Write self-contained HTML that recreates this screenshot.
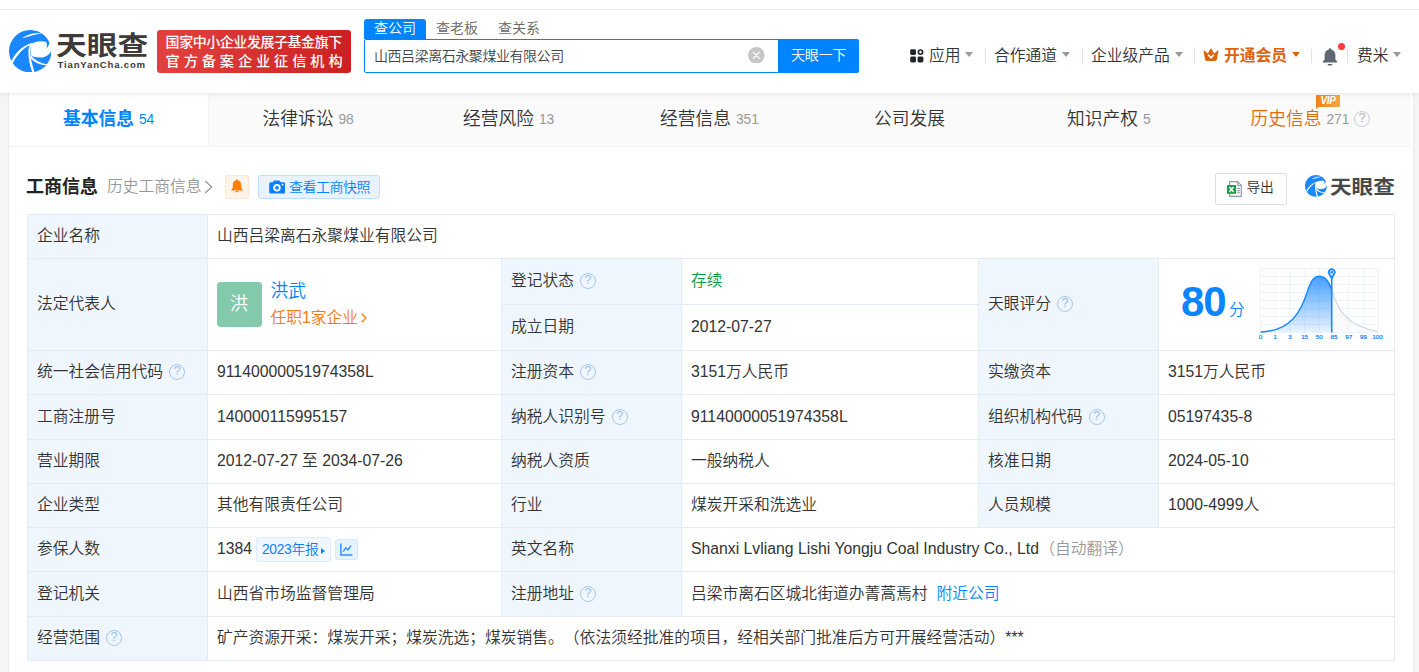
<!DOCTYPE html>
<html lang="zh-CN">
<head>
<meta charset="utf-8">
<title>山西吕梁离石永聚煤业有限公司 - 天眼查</title>
<style>
*{box-sizing:border-box;margin:0;padding:0}
html,body{width:1419px;height:672px;overflow:hidden;background:#f5f5f5}
body{font-weight:350;text-spacing-trim:space-all;font-family:"Liberation Sans","Noto Sans CJK SC",sans-serif;font-size:16px;color:#333;position:relative}
.abs{position:absolute;white-space:nowrap}
/* top strip + header */
#topstrip{z-index:6;position:absolute;left:0;top:0;width:1419px;height:10px;background:#fff;border-bottom:1px solid #e6e6e6}
#header{position:absolute;left:0;top:10px;width:1419px;height:83px;background:#fff;box-shadow:0 1px 5px rgba(0,0,0,.09);z-index:5}
#main{position:absolute;left:9px;top:93px;width:1404px;height:579px;background:#fff;box-shadow:0 0 0 1px #ebebeb}
.nv{top:35px;font-size:15.77px;line-height:22px;color:#333}
.car{position:absolute;top:42px;width:0;height:0;border-left:4.6px solid transparent;border-right:4.6px solid transparent;border-top:5.2px solid #999;margin-left:-0.5px}
.dv{position:absolute;top:39px;width:1px;height:14px;background:#dde2e8}
/* tabs */
#tabs{position:absolute;left:0;top:0;width:1401px;height:54px;background:#fafafa;border-bottom:1px solid #f4f4f4}
.tab{position:absolute;top:0;height:53px;line-height:53px;font-size:17.74px;color:#333;white-space:nowrap}
.tab .n{font-size:13.8px;color:#999;margin-left:5px;position:relative;top:-1px}
#tab-active{left:0;width:200px;background:#fff;border-right:1px solid #f3f3f3;height:53px}
/* table */
.c{position:absolute;border-left:1px solid #e3ecf6;border-top:1px solid #e3ecf6;font-size:15.77px;white-space:nowrap;padding-left:9px;color:#333;background:#fff;overflow:hidden}
.c.l{background:#eff6fe}
.q{display:inline-block;width:16px;height:16px;border:1.4px solid #a3c9f0;border-radius:50%;color:#98c0ea;font-size:12.5px;line-height:13.5px;text-align:center;vertical-align:2.5px;margin-left:6px;font-family:"Liberation Sans",sans-serif}
</style>
</head>
<body>
<div id="topstrip"></div>
<div id="header">
  <!-- logo -->
  <svg class="abs" style="left:8.8px;top:19.6px" width="42.4" height="42.4" viewBox="62 60 548 548">
    <circle cx="336" cy="334" r="274" fill="#1a87ff"/>
    <path d="M340 242 C400 205 480 195 540 213 C556 240 556 272 546 298 C570 276 585 246 584 212 L620 260 L620 318 L606 319 C596 372 548 408 485 414 C430 418 385 408 352 396 C338 350 336 290 340 242 Z" fill="#fff"/>
    <path d="M240 160 C320 110 400 94 496 100 C410 118 330 140 240 168 Z" fill="#fff"/>
    <path d="M88 467 C150 348 240 262 352 228 L357 245 C261 282 172 371 110 488 Z" fill="#fff"/>
    <path d="M343 239 C330 300 328 420 394 606 L364 611 C305 440 304 320 329 245 Z" fill="#fff"/>
    <path d="M346 388 C390 446 460 490 552 503 L548 513 C450 512 376 474 336 412 Z" fill="#fff"/>
  </svg>
  <div class="abs" id="logotxt" style="left:55.8px;top:19px;font-size:25.8px;line-height:34px;font-weight:700;color:#3e3a39;transform:scaleX(1.19);transform-origin:0 0">天眼查</div>
  <div class="abs" id="logosub" style="left:57.6px;top:49px;font-size:9.6px;line-height:12px;font-weight:700;color:#3e3a39;letter-spacing:0.8px">TianYanCha.com</div>
  <!-- red badge -->
  <div class="abs" id="badge" style="left:157px;top:20px;width:194px;height:43px;border-radius:3px;background:linear-gradient(90deg,#e2423f,#cb2021);color:#fff;font-weight:500"></div>
  <div class="abs" style="left:165.6px;top:23px;color:#fff;font-size:14px;line-height:18px;letter-spacing:-0.45px;font-weight:500">国家中小企业发展子基金旗下</div>
  <div class="abs" style="left:165.6px;top:42px;color:#fff;font-size:14.2px;line-height:18px;letter-spacing:3.9px;font-weight:500">官方备案企业征信机构</div>
  <!-- search tabs -->
  <div class="abs" style="left:364px;top:9px;width:62px;height:20px;background:#0084ff;border-radius:3px 3px 0 0;color:#fff;font-size:14px;line-height:19px;text-align:center">查公司</div>
  <div class="abs" style="left:426px;top:9px;width:62px;height:20px;color:#666;font-size:14px;line-height:19px;text-align:center">查老板</div>
  <div class="abs" style="left:488px;top:9px;width:62px;height:20px;color:#666;font-size:14px;line-height:19px;text-align:center">查关系</div>
  <!-- search input -->
  <div class="abs" style="left:364px;top:29px;width:415px;height:34px;border:1px solid #0084ff;border-radius:2px 0 0 2px;background:#fff"></div>
  <div class="abs" style="left:374px;top:36px;font-size:14px;line-height:20px;color:#444;letter-spacing:-0.45px">山西吕梁离石永聚煤业有限公司</div>
  <svg class="abs" style="left:748.3px;top:36.6px" width="16.6" height="16.6" viewBox="0 0 18 18"><circle cx="9" cy="9" r="9" fill="#c6c6c6"/><path d="M5.6 5.6 L12.4 12.4 M12.4 5.6 L5.6 12.4" stroke="#fff" stroke-width="1.3" stroke-linecap="round"/></svg>
  <div class="abs" style="left:778px;top:29px;width:81px;height:34px;background:#0084ff;border-radius:0 2px 2px 0;color:#fff;font-size:14px;line-height:33px;text-align:center;letter-spacing:-0.3px">天眼一下</div>
  <!-- right nav -->
  <div id="nav">
    <svg class="abs" style="left:910px;top:39px" width="13.6" height="13.6" viewBox="0 0 14 14"><rect x="0.2" y="0.2" width="6" height="6" rx="1.5" fill="#20242b"/><rect x="0.2" y="7.8" width="6" height="6" rx="1.5" fill="#20242b"/><rect x="7.8" y="7.8" width="6" height="6" rx="1.5" fill="#20242b"/><circle cx="10.8" cy="3.2" r="2.2" fill="none" stroke="#20242b" stroke-width="1.7"/></svg>
    <div class="abs nv" style="left:929px">应用</div><i class="car" style="left:965px"></i>
    <i class="dv" style="left:985px"></i>
    <div class="abs nv" style="left:994px">合作通道</div><i class="car" style="left:1062px"></i>
    <i class="dv" style="left:1082px"></i>
    <div class="abs nv" style="left:1091px">企业级产品</div><i class="car" style="left:1175px"></i>
    <i class="dv" style="left:1194px"></i>
    <svg class="abs" style="left:1203px;top:38.4px" width="16" height="13.4" viewBox="0 0 16 13.4"><path d="M0.5 2.6 Q0.7 2 1.4 2.5 L4.7 5.4 L7.5 0.7 Q8 0 8.5 0.7 L11.3 5.4 L14.6 2.5 Q15.3 2 15.5 2.6 L14 11.2 Q13.7 13 12 13 L4 13 Q2.3 13 2 11.2 Z" fill="#da650d"/><path d="M5.2 6.8 L8 9.8 L10.8 6.8" fill="none" stroke="#fff" stroke-width="1.7"/></svg>
    <div class="abs nv" style="left:1224px;color:#da650d;font-weight:700">开通会员</div><i class="car" style="left:1292px;border-top-color:#da650d"></i>
    <i class="dv" style="left:1311px"></i>
    <svg class="abs" style="left:1321.5px;top:37px" width="16" height="20" viewBox="0 0 16 20"><path d="M8 1.2 C8.7 1.2 9.2 1.7 9.2 2.4 C11.9 3 13.4 5.2 13.4 8 L13.4 12.4 L15.2 14.6 L15.2 15.6 L0.8 15.6 L0.8 14.6 L2.6 12.4 L2.6 8 C2.6 5.2 4.1 3 6.8 2.4 C6.8 1.7 7.3 1.2 8 1.2 Z" fill="#5f6872"/><rect x="5.6" y="17" width="4.8" height="1.6" rx=".8" fill="#5f6872"/></svg>
    <i class="abs" style="left:1338px;top:33px;width:7px;height:7px;border-radius:50%;background:#ff3b3b"></i>
    <i class="dv" style="left:1347px"></i>
    <div class="abs nv" style="left:1357px">费米</div><i class="car" style="left:1393px"></i>
  </div>
</div>
<div id="main">
  <div id="tabs">
    <div class="tab" id="tab-active"></div>
    <div class="tab" style="left:54px;color:#0084ff;font-weight:700">基本信息<span class="n" style="color:#0084ff;font-weight:350">54</span></div>
    <div class="tab" style="left:253.5px">法律诉讼<span class="n">98</span></div>
    <div class="tab" style="left:454px">经营风险<span class="n">13</span></div>
    <div class="tab" style="left:651px">经营信息<span class="n">351</span></div>
    <div class="tab" style="left:865px">公司发展</div>
    <div class="tab" style="left:1058px">知识产权<span class="n">5</span></div>
    <div class="tab" style="left:1241.5px;color:#e0690f">历史信息<span class="n">271</span></div>
    <div class="abs" style="left:1345px;top:17.5px;width:16px;height:16px;border:1.5px solid #c9ced4;border-radius:50%;color:#b4b9bf;font-size:12.5px;line-height:13px;text-align:center;font-family:'Liberation Sans',sans-serif">?</div>
    <div class="abs" style="left:1307px;top:2.4px;width:24px;height:12px;background:linear-gradient(90deg,#f0831a,#f6a545);color:#fff;font-size:10px;line-height:12px;font-weight:700;font-style:italic;text-align:center;border-radius:1px;letter-spacing:-0.3px">VIP</div>
    <i class="abs" style="left:1307px;top:14px;width:0;height:0;border-top:2.5px solid #f0831a;border-right:3px solid transparent"></i>
  </div>
  <!-- section header -->
  <div class="abs" style="left:17px;top:81px;font-size:18px;line-height:26px;font-weight:700;color:#222">工商信息</div>
  <div class="abs" style="left:98px;top:82px;font-size:15.77px;line-height:24px;color:#999">历史工商信息<svg width="9" height="14" viewBox="0 0 9 14" style="margin-left:2px;vertical-align:-1.5px"><path d="M1.2 1 L7.6 7 L1.2 13" fill="none" stroke="#999" stroke-width="1.3"/></svg></div>
  <div class="abs" style="left:216px;top:82px;width:24px;height:24px;background:#fff4ea;border:1px solid #ffe6d0;border-radius:2px"></div>
  <svg class="abs" style="left:222px;top:85.6px" width="12" height="14" viewBox="0 0 12 14"><path d="M6 0.6 C6.7 0.6 7.1 1 7.1 1.6 C9.1 2.1 10.2 3.8 10.2 5.8 L10.2 8.8 L11.6 10.6 L11.6 11.4 L0.4 11.4 L0.4 10.6 L1.8 8.8 L1.8 5.8 C1.8 3.8 2.9 2.1 4.9 1.6 C4.9 1 5.3 0.6 6 0.6 Z" fill="#ff7d0a"/><path d="M4.2 12 L7.8 12 Q7.4 13.4 6 13.4 Q4.6 13.4 4.2 12 Z" fill="#ff7d0a"/></svg>
  <div class="abs" style="left:249px;top:82px;width:122px;height:24px;background:#e9f3ff;border:1px solid #c0defe;border-radius:3px"></div>
  <svg class="abs" style="left:259.5px;top:87px" width="16.4" height="14" viewBox="0 0 16.4 14"><path d="M5 0.4 L10.4 0.4 L11.6 2.2 L14.6 2.2 Q16.2 2.2 16.2 3.8 L16.2 12 Q16.2 13.6 14.6 13.6 L1.8 13.6 Q0.2 13.6 0.2 12 L0.2 3.8 Q0.2 2.2 1.8 2.2 L3.8 2.2 Z" fill="#0a80ff"/><circle cx="8" cy="7.8" r="3.7" fill="#fff"/><circle cx="8" cy="7.8" r="1.9" fill="#0a80ff"/><circle cx="13.6" cy="4.6" r="0.9" fill="#fff"/></svg>
  <div class="abs" style="left:280px;top:84px;font-size:14px;line-height:20px;color:#0582ff;letter-spacing:-0.5px">查看工商快照</div>
  <!-- export + watermark -->
  <div class="abs" style="left:1206px;top:80px;width:72px;height:32px;background:#fff;border:1px solid #dedede;border-radius:2px"></div>
  <svg class="abs" style="left:1218px;top:88px" width="15" height="16" viewBox="0 0 15 16"><path d="M2.6 0.7 H10.6 L14.3 4.4 V15.3 H2.6 Z" fill="#fff" stroke="#8f99a6" stroke-width="1.2" stroke-linejoin="round"/><path d="M10.6 0.7 V4.4 H14.3" fill="none" stroke="#8f99a6" stroke-width="1"/><path d="M10.2 7.4H13M10.2 9.6H13M10.2 11.8H13" stroke="#8f99a6" stroke-width="1.1"/><rect x="0" y="4" width="9" height="8.8" fill="#17a24a"/><path d="M2.5 6 L6.5 10.8 M6.5 6 L2.5 10.8" stroke="#fff" stroke-width="1.5"/></svg>
  <div class="abs" style="left:1237.6px;top:85.4px;font-size:13.8px;line-height:20px;color:#333;letter-spacing:-0.4px">导出</div>
  <svg class="abs" style="left:1296px;top:82.4px" width="21.8" height="21.8" viewBox="62 60 548 548">
    <circle cx="336" cy="334" r="274" fill="#1a87ff"/>
    <path d="M340 242 C400 205 480 195 540 213 C556 240 556 272 546 298 C570 276 585 246 584 212 L620 260 L620 318 L606 319 C596 372 548 408 485 414 C430 418 385 408 352 396 C338 350 336 290 340 242 Z" fill="#fff"/>
    <path d="M240 160 C320 110 400 94 496 100 C410 118 330 140 240 168 Z" fill="#fff"/>
    <path d="M88 467 C150 348 240 262 352 228 L357 245 C261 282 172 371 110 488 Z" fill="#fff"/>
    <path d="M343 239 C330 300 328 420 394 606 L364 611 C305 440 304 320 329 245 Z" fill="#fff"/>
    <path d="M346 388 C390 446 460 490 552 503 L548 513 C450 512 376 474 336 412 Z" fill="#fff"/>
  </svg>
  <div class="abs" id="wm" style="left:1320.5px;top:80.2px;font-size:18.8px;line-height:30px;font-weight:700;color:#484848;transform:scaleX(1.15);transform-origin:0 0">天眼查</div>
  <!-- table -->
  <div class="c l" style="left:18px;top:121px;width:180px;height:44px;line-height:41px;">企业名称</div>
  <div class="c v" style="left:198px;top:121px;width:1187px;height:44px;line-height:41px;">山西吕梁离石永聚煤业有限公司</div>
  <div class="c l" style="left:18px;top:165px;width:180px;height:92px;line-height:89px;">法定代表人</div>
  <div class="c v" style="left:198px;top:165px;width:294px;height:92px;line-height:89px;"></div>
  <div class="c l" style="left:492px;top:165px;width:180px;height:46px;line-height:43px;">登记状态<span class="q">?</span></div>
  <div class="c v" style="left:672px;top:165px;width:297px;height:46px;line-height:43px;"><span style="color:#089944">存续</span></div>
  <div class="c l" style="left:492px;top:211px;width:180px;height:46px;line-height:43px;">成立日期</div>
  <div class="c v" style="left:672px;top:211px;width:297px;height:46px;line-height:43px;">2012-07-27</div>
  <div class="c l" style="left:969px;top:165px;width:180px;height:92px;line-height:89px;">天眼评分<span class="q">?</span></div>
  <div class="c v" style="left:1149px;top:165px;width:236px;height:92px;line-height:89px;"></div>
  <div class="c l" style="left:18px;top:257px;width:180px;height:44px;line-height:41px;">统一社会信用代码<span class="q">?</span></div>
  <div class="c v" style="left:198px;top:257px;width:294px;height:44px;line-height:41px;">91140000051974358L</div>
  <div class="c l" style="left:492px;top:257px;width:180px;height:44px;line-height:41px;">注册资本<span class="q">?</span></div>
  <div class="c v" style="left:672px;top:257px;width:297px;height:44px;line-height:41px;">3151万人民币</div>
  <div class="c l" style="left:969px;top:257px;width:180px;height:44px;line-height:41px;">实缴资本</div>
  <div class="c v" style="left:1149px;top:257px;width:236px;height:44px;line-height:41px;">3151万人民币</div>
  <div class="c l" style="left:18px;top:301px;width:180px;height:45px;line-height:43px;">工商注册号</div>
  <div class="c v" style="left:198px;top:301px;width:294px;height:45px;line-height:43px;">140000115995157</div>
  <div class="c l" style="left:492px;top:301px;width:180px;height:45px;line-height:43px;">纳税人识别号<span class="q">?</span></div>
  <div class="c v" style="left:672px;top:301px;width:297px;height:45px;line-height:43px;">91140000051974358L</div>
  <div class="c l" style="left:969px;top:301px;width:180px;height:45px;line-height:43px;">组织机构代码<span class="q">?</span></div>
  <div class="c v" style="left:1149px;top:301px;width:236px;height:45px;line-height:43px;">05197435-8</div>
  <div class="c l" style="left:18px;top:346px;width:180px;height:44px;line-height:41px;">营业期限</div>
  <div class="c v" style="left:198px;top:346px;width:294px;height:44px;line-height:41px;">2012-07-27 至 2034-07-26</div>
  <div class="c l" style="left:492px;top:346px;width:180px;height:44px;line-height:41px;">纳税人资质</div>
  <div class="c v" style="left:672px;top:346px;width:297px;height:44px;line-height:41px;">一般纳税人</div>
  <div class="c l" style="left:969px;top:346px;width:180px;height:44px;line-height:41px;">核准日期</div>
  <div class="c v" style="left:1149px;top:346px;width:236px;height:44px;line-height:41px;">2024-05-10</div>
  <div class="c l" style="left:18px;top:390px;width:180px;height:44px;line-height:41px;">企业类型</div>
  <div class="c v" style="left:198px;top:390px;width:294px;height:44px;line-height:41px;">其他有限责任公司</div>
  <div class="c l" style="left:492px;top:390px;width:180px;height:44px;line-height:41px;">行业</div>
  <div class="c v" style="left:672px;top:390px;width:297px;height:44px;line-height:41px;">煤炭开采和洗选业</div>
  <div class="c l" style="left:969px;top:390px;width:180px;height:44px;line-height:41px;">人员规模</div>
  <div class="c v" style="left:1149px;top:390px;width:236px;height:44px;line-height:41px;">1000-4999人</div>
  <div class="c l" style="left:18px;top:434px;width:180px;height:44px;line-height:41px;">参保人数</div>
  <div class="c v" style="left:198px;top:434px;width:294px;height:44px;line-height:41px;">1384</div>
  <div class="c l" style="left:492px;top:434px;width:180px;height:44px;line-height:41px;">英文名称</div>
  <div class="c v" style="left:672px;top:434px;width:713px;height:44px;line-height:41px;">Shanxi Lvliang Lishi Yongju Coal Industry Co., Ltd<span style="color:#999;margin-left:0.3px">（自动翻译）</span></div>
  <div class="c l" style="left:18px;top:478px;width:180px;height:45px;line-height:43px;">登记机关</div>
  <div class="c v" style="left:198px;top:478px;width:294px;height:45px;line-height:43px;">山西省市场监督管理局</div>
  <div class="c l" style="left:492px;top:478px;width:180px;height:45px;line-height:43px;">注册地址<span class="q">?</span></div>
  <div class="c v" style="left:672px;top:478px;width:713px;height:45px;line-height:43px;">吕梁市离石区城北街道办菁蒿焉村<span style="color:#0084ff;margin-left:9px">附近公司</span></div>
  <div class="c l" style="left:18px;top:523px;width:180px;height:44px;line-height:41px;">经营范围<span class="q">?</span></div>
  <div class="c v" style="left:198px;top:523px;width:1187px;height:44px;line-height:41px;">矿产资源开采：煤炭开采；煤炭洗选；煤炭销售。（依法须经批准的项目，经相关部门批准后方可开展经营活动）***</div>
  <div class="abs" style="left:1385px;top:121px;width:1px;height:447px;background:#e3ecf6"></div>
  <div class="abs" style="left:18px;top:567px;width:1368px;height:1px;background:#e3ecf6"></div>

  <!-- legal rep -->
  <div class="abs" style="left:208px;top:189px;width:45px;height:45px;border-radius:4px;background:#83c9ac;color:#fff;font-size:18.4px;line-height:44px;text-align:center;text-indent:-1px">洪</div>
  <div class="abs" style="left:261.5px;top:185px;font-size:17.74px;line-height:26px;color:#0084ff">洪武</div>
  <div class="abs" style="left:261.5px;top:212.5px;font-size:15.77px;line-height:24px;color:#f57a0f">任职1家企业<svg width="6" height="10" viewBox="0 0 6 10" style="margin-left:2.5px;vertical-align:-0.5px"><path d="M0.8 0.8 L5 5 L0.8 9.2" fill="none" stroke="#f57a0f" stroke-width="1.3"/></svg></div>
  <!-- score -->
  <div class="abs" style="left:1172px;top:185px;font-size:42px;line-height:48px;font-weight:700;color:#0a84ff;letter-spacing:-1.1px">80</div>
  <div class="abs" style="left:1220px;top:206px;font-size:15.77px;line-height:22px;color:#0a84ff">分</div>
  <svg class="abs" style="left:1246px;top:170px" width="132" height="80" viewBox="1255 263 132 80" font-family="Liberation Sans, sans-serif">
    <defs><linearGradient id="bg1" x1="0" y1="0" x2="0" y2="1"><stop offset="0" stop-color="#3d9bff" stop-opacity=".95"/><stop offset="1" stop-color="#3d9bff" stop-opacity=".12"/></linearGradient></defs>
    <g stroke="#ebf3fc" stroke-width="1" fill="none">
      <path d="M1260.5 268.5H1378.5M1260.5 276.5H1378.5M1260.5 284.5H1378.5M1260.5 292.5H1378.5M1260.5 300.5H1378.5M1260.5 308.5H1378.5M1260.5 316.5H1378.5M1260.5 324.5H1378.5M1260.5 332.5H1378.5"/>
      <path d="M1260.5 268.5V332.5M1275.2 268.5V332.5M1289.9 268.5V332.5M1304.6 268.5V332.5M1319.3 268.5V332.5M1334 268.5V332.5M1348.7 268.5V332.5M1363.4 268.5V332.5M1378.1 268.5V332.5"/>
    </g>
    <path id="curveR" d="M1331.7 290 C1337 308 1345 326 1378 331.5 L1331.7 332 Z" fill="#f8f8f8" opacity=".7"/>
    <path d="M1331.7 290 C1337 308 1345 326 1378 331.5" fill="none" stroke="#cbd5de" stroke-width="1.1"/>
    <path d="M1260.5 332 C1290 331 1301 313 1308 289.5 C1312 278.5 1315 276.3 1319.3 276.3 C1324.5 276.3 1328.5 280 1331.7 290 L1331.7 332 Z" fill="url(#bg1)"/>
    <path d="M1260.5 332 C1290 331 1301 313 1308 289.5 C1312 278.5 1315 276.3 1319.3 276.3 C1324.5 276.3 1328.5 280 1331.7 290" fill="none" stroke="#1a87ff" stroke-width="1.4"/>
    <path d="M1331.7 276 V332.5" stroke="#1a87ff" stroke-width="1.6"/>
    <path d="M1331.7 278.2 L1329.6 274.3 A2.9 2.9 0 1 1 1333.8 274.3 Z" fill="#fff" stroke="#1a87ff" stroke-width="1.8" stroke-linejoin="round"/>
    <circle cx="1331.7" cy="272.2" r="1.25" fill="#1a87ff"/>
    <g font-size="6.2" fill="#0f7cf5" stroke="#0f7cf5" stroke-width=".2" text-anchor="middle">
      <text x="1260.6" y="339.4">0</text><text x="1275.3" y="339.4">1</text><text x="1290" y="339.4">3</text><text x="1304.6" y="339.4">15</text><text x="1319.3" y="339.4">50</text><text x="1334" y="339.4">85</text><text x="1348.7" y="339.4">97</text><text x="1363.4" y="339.4">99</text><text x="1377.6" y="339.4">100</text>
    </g>
  </svg>
  <!-- year report buttons -->
  <div class="abs" style="left:247px;top:444px;width:75px;height:25px;background:#f1f7ff;border:1px solid #dfecfd;border-radius:3px;color:#0a80ff;font-size:13.8px;line-height:23.5px;padding-left:5px;letter-spacing:-0.3px">2023年报<i style="display:inline-block;width:0;height:0;border-top:3.6px solid transparent;border-bottom:3.6px solid transparent;border-left:4.6px solid #0a80ff;margin-left:2px;vertical-align:0.5px"></i></div>
  <div class="abs" style="left:326px;top:446px;width:23px;height:21px;background:#e7f2ff;border:1px solid #d5e7fd;border-radius:3px"></div>
  <svg class="abs" style="left:331px;top:450px" width="13" height="13" viewBox="0 0 13 13"><path d="M0.9 0.4 V11.9 H12.4" fill="none" stroke="#2b90ff" stroke-width="1.5"/><path d="M3.2 8.6 L5.8 4.8 L8 7 L11 2.6" fill="none" stroke="#2b90ff" stroke-width="1.4"/></svg>
</div>
</body>
</html>
